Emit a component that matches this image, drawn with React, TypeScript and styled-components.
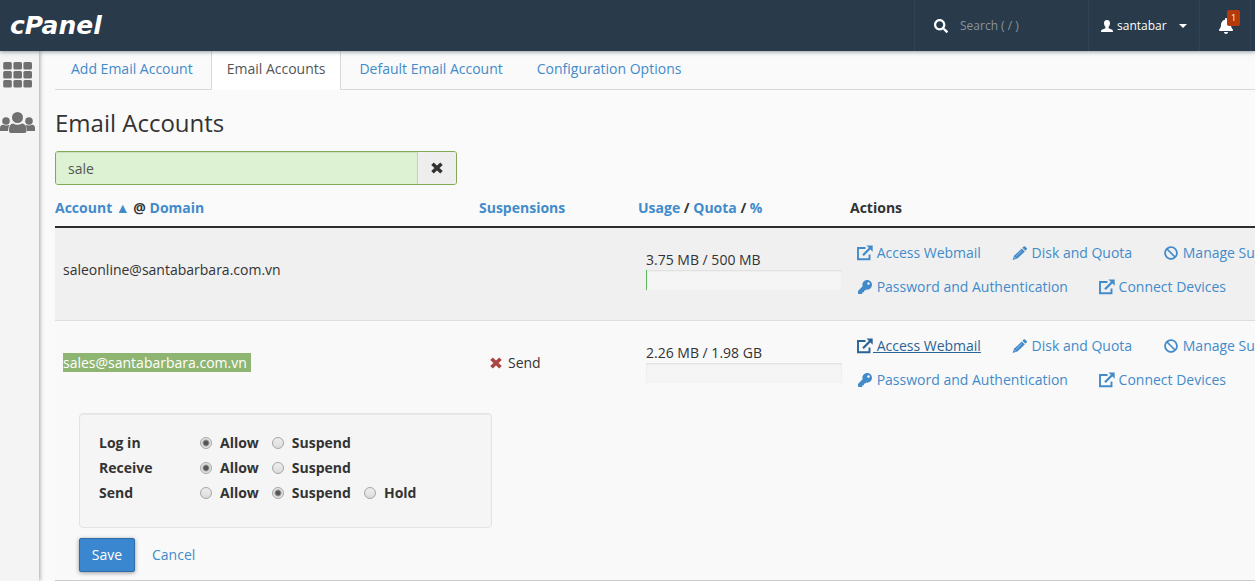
import React from "react";
import styled, { createGlobalStyle } from "styled-components";
import { FaSearch, FaBan, FaKey, FaBell } from "react-icons/fa";

const Global = createGlobalStyle`
  * { box-sizing: border-box; }
  body {
    margin: 0;
    background: #fafafa;
    color: #333;
    font: 14px/20px "Open Sans", "Noto Sans", sans-serif;
    overflow: hidden;
  }
  a { color: #428bca; text-decoration: none; }
`;

const Page = styled.div`
  display: flex;
  flex-direction: column;
  min-height: 100vh;
`;

const TopBar = styled.header`
  display: flex;
  align-items: stretch;
  height: 51px;
  background: #293a4a;
  color: #fff;
  box-shadow: 0 1px 4px rgba(41, 58, 74, 0.5);
  z-index: 1;
`;

const Brand = styled.a`
  display: flex;
  align-items: center;
  margin-right: auto;
  padding-left: 10px;
  color: #fff;
`;

const Wordmark = styled.span`
  font: italic 700 25px/30px "DejaVu Sans", sans-serif;
`;

const BarItem = styled.div<{ $width: number }>`
  display: flex;
  align-items: center;
  width: ${(p) => p.$width}px;
  border-left: 1px solid #324355;
`;

const SearchLabel = styled.label`
  display: flex;
  align-items: center;
  gap: 12px;
  padding-left: 19px;
  font-size: 14px;
`;

const SearchInput = styled.input`
  width: 110px;
  padding: 0;
  border: 0;
  outline: 0;
  background: transparent;
  color: #fff;
  font: 12px/20px "Open Sans", "Noto Sans", sans-serif;
  &::placeholder { color: #8a939b; opacity: 1; }
`;

const BarButton = styled.button`
  display: flex;
  align-items: center;
  gap: 4px;
  padding: 0 0 0 12px;
  border: 0;
  background: transparent;
  color: #fff;
  font: 12px/20px "Open Sans", "Noto Sans", sans-serif;
`;

const CaretSlot = styled.span`
  display: flex;
  margin-left: 8px;
`;

const BellButton = styled(BarButton)`
  position: relative;
  padding-left: 18px;
`;

const Badge = styled.span`
  position: absolute;
  top: -8px;
  left: 27px;
  width: 13px;
  height: 16px;
  border-radius: 2px;
  background: #b5390a;
  font-size: 9px;
  line-height: 16px;
  text-align: center;
`;

const Body = styled.div`
  display: flex;
  flex: 1;
`;

const Rail = styled.nav`
  display: flex;
  flex-direction: column;
  flex: none;
  gap: 24px;
  width: 39px;
  padding-top: 11px;
  background: #f4f4f4;
  box-shadow: 1px 0 4px rgba(0, 0, 0, 0.35);
`;

const RailLink = styled.a`
  display: flex;
  width: 36px;
  color: #707070;
`;

const Main = styled.main`
  flex: 1;
  min-width: 0;
  padding-left: 16px;
  overflow: hidden;
`;

const Tabs = styled.nav`
  display: flex;
  gap: 2px;
  height: 39px;
  border-bottom: 1px solid #d8d8d8;
`;

const Tab = styled.a<{ $active?: boolean }>`
  height: 39px;
  padding: 8px 15px;
  border: solid #d8d8d8;
  border-width: 0 1px;
  border-color: ${(p) => (p.$active ? "#d8d8d8" : "transparent")};
  background: ${(p) => (p.$active ? "#fff" : "transparent")};
  color: ${(p) => (p.$active ? "#555" : "#428bca")};
  white-space: nowrap;
`;

const Title = styled.h1`
  margin: 17px 0 12px;
  font-size: 24px;
  line-height: 32px;
  font-weight: 400;
`;

const Filter = styled.form`
  display: flex;
  width: 402px;
  height: 34px;
  border: 1px solid #82a957;
  border-radius: 3px;
  overflow: hidden;
`;

const FilterInput = styled.input`
  flex: 1;
  min-width: 0;
  padding: 2px 12px 0;
  border: 0;
  outline: 0;
  background: #dcf2d3;
  color: #555;
  font: 14px/20px "Open Sans", "Noto Sans", sans-serif;
  box-shadow: inset 0 1px 1px rgba(0, 0, 0, 0.08);
`;

const ClearButton = styled.button`
  display: flex;
  align-items: center;
  justify-content: center;
  width: 39px;
  padding: 0;
  border: 0;
  border-left: 1px solid #ccc;
  background: #eee;
  color: #333;
`;

const Table = styled.table`
  width: 100%;
  min-width: 1240px;
  margin-top: 11px;
  border-collapse: collapse;
  table-layout: fixed;
`;

const HeadCell = styled.th<{ $width?: number }>`
  width: ${(p) => (p.$width ? `${p.$width}px` : "auto")};
  height: 31px;
  padding: 2px 0 7px;
  border-bottom: 2px solid #2e2e2e;
  text-align: left;
  vertical-align: top;
  font-weight: 700;
`;

const Row = styled.tr<{ $shade?: boolean }>`
  background: ${(p) => (p.$shade ? "#f0f0f0" : "#f9f9f9")};
`;

const Cell = styled.td<{ $top: number }>`
  height: 93px;
  padding: ${(p) => p.$top}px 8px 0;
  border-top: 1px solid #ddd;
  vertical-align: top;
`;

const ActionCell = styled(Cell)`
  padding-left: 7px;
`;

const FormCell = styled.td`
  padding: 0 24px 8px;
  border-bottom: 1px solid #ccc;
`;

const Marked = styled.span`
  padding-right: 4px;
  background: #8fb573;
  color: #fff;
`;

const Suspension = styled.span`
  display: flex;
  align-items: center;
  gap: 6px;
  padding-left: 3px;
  svg { color: #a94442; }
`;

const Meter = styled.div`
  height: 20px;
  background: #f5f5f5;
  box-shadow: inset 0 1px 2px rgba(0, 0, 0, 0.1);
`;

const MeterFill = styled.div`
  height: 20px;
  background: #5cb85c;
`;

const ActionLine = styled.div`
  display: flex;
  gap: 31px;
  margin-bottom: 14px;
`;

const Action = styled.a<{ $hovered?: boolean }>`
  display: flex;
  align-items: center;
  white-space: pre;
  color: ${(p) => (p.$hovered ? "#2a6496" : "#428bca")};
  text-decoration: ${(p) => (p.$hovered ? "underline" : "none")};
`;

const IconSlot = styled.span`
  display: flex;
  justify-content: center;
  width: 16px;
`;

const Well = styled.div`
  display: flex;
  flex-direction: column;
  gap: 5px;
  width: 413px;
  height: 115px;
  padding: 19px;
  border: 1px solid #e3e3e3;
  border-radius: 4px;
  background: #f5f5f5;
  box-shadow: inset 0 1px 1px rgba(0, 0, 0, 0.05);
`;

const ChoiceRow = styled.div`
  display: flex;
  font-weight: 700;
`;

const ChoiceName = styled.span`
  width: 101px;
`;

const Choice = styled.label`
  display: flex;
  align-items: center;
  gap: 8px;
  margin-right: 13px;
`;

const Radio = styled.input`
  appearance: none;
  width: 12px;
  height: 12px;
  margin: 0;
  border: 1px solid #a6a6a6;
  border-radius: 50%;
  background: linear-gradient(#eee, #dcdcdc);
  &:checked {
    background: radial-gradient(circle, #555 0 2px, #e4e4e4 4px);
  }
`;

const Buttons = styled.div`
  display: flex;
  align-items: center;
  gap: 17px;
  margin-top: 10px;
`;

const SaveButton = styled.button`
  width: 56px;
  height: 34px;
  padding: 0;
  border: 1px solid #2c6ca8;
  border-radius: 2px;
  background: #3a87d0;
  color: #fff;
  font: 14px/20px "Open Sans", "Noto Sans", sans-serif;
  box-shadow: 0 1px 4px rgba(0, 0, 0, 0.4);
`;

const GridIcon = () => (
  <svg width="36" height="26" viewBox="0 0 36 26" fill="currentColor" aria-hidden="true">
    {[0, 9, 18].map((y) =>
      [3.2, 13.4, 23.4].map((x) => <rect key={`${x}-${y}`} x={x} y={y} width="8.6" height="7.5" rx="1.5" />)
    )}
  </svg>
);

const PeopleIcon = () => (
  <svg width="36" height="22" viewBox="0 0 36 22" fill="currentColor" aria-hidden="true">
    <circle cx="6" cy="9" r="3.8" />
    <circle cx="29" cy="9" r="3.8" />
    <path d="M0 19V16Q0 13 3 12.800Q6 14.300 9.500 12.800Q8 15 8 19Z" />
    <path d="M35 19V16Q35 13 32 12.800Q29 14.300 25.500 12.800Q27 15 27 19Z" />
    <circle cx="17.500" cy="5.500" r="5.500" />
    <path d="M9 18Q9 12 13 11.500Q17.500 14 22 11.500Q26.500 12 26.500 18V19Q26.500 21 24.500 21H11Q9 21 9 19Z" />
  </svg>
);

const UserIcon = () => (
  <svg width="12" height="12" viewBox="0 0 12 12" fill="currentColor" aria-hidden="true">
    <path d="M6 0C7.8 0 9 1.2 9 3.2 9 4.8 8.3 6 7.6 6.8V8.2L11.2 9.8Q12 10.3 12 12H0Q0 10.3 .8 9.8L4.4 8.2V6.8C3.700 6 3 4.800 3 3.200 3 1.200 4.200 0 6 0Z" />
  </svg>
);

const CaretIcon = () => (
  <svg width="8" height="4" viewBox="0 0 8 4" fill="currentColor" aria-hidden="true">
    <path d="M0 0H8L4 4Z" />
  </svg>
);

const CrossIcon = () => (
  <svg width="12" height="12" viewBox="0 0 12 12" stroke="currentColor" strokeWidth="3.6" aria-hidden="true">
    <path d="M1.500 1.700L10.500 10.300M10.500 1.700L1.500 10.300" />
  </svg>
);

const ExternalIcon = () => (
  <svg width="16" height="16" viewBox="0 0 16 16" fill="none" stroke="currentColor" aria-hidden="true">
    <path d="M8.500 3H1V14.200H12.500V9.500" strokeWidth="1.900" />
    <path d="M6 10.200L13 3.200" strokeWidth="2.300" />
    <path d="M9.500 .5H15.700V6.700Z" fill="currentColor" stroke="none" />
  </svg>
);

const PencilIcon = () => (
  <svg width="16" height="14" viewBox="0 0 16 14" fill="currentColor" aria-hidden="true">
    <path d="M11.600 .6Q12.400 -.2 13.200 .6L14.600 2Q15.400 2.800 14.600 3.600L13.400 4.800L10.400 1.800Z" />
    <path d="M9.800 2.400L12.800 5.400L5.400 12.600L.6 14L2 9.800Z" />
    <path d="M9.600 4.800L4.200 10.200" stroke="#fff" strokeOpacity=".55" strokeWidth=".8" />
    <path d="M2.300 11L3.600 12.300" stroke="#fff" strokeOpacity=".7" strokeWidth="1" />
  </svg>
);

function Actions({ hovered }: { hovered?: boolean }) {
  return (
    <>
      <ActionLine>
        <Action href="#webmail" $hovered={hovered}><IconSlot><ExternalIcon /></IconSlot>{"\u00a0Access Webmail"}</Action>
        <Action href="#quota"><IconSlot><PencilIcon /></IconSlot>{"\u00a0Disk and Quota"}</Action>
        <Action href="#suspend"><IconSlot><FaBan size={14} /></IconSlot>{"\u00a0Manage Suspension"}</Action>
      </ActionLine>
      <ActionLine>
        <Action href="#password"><IconSlot><FaKey size={14} /></IconSlot>{"\u00a0Password and Authentication"}</Action>
        <Action href="#devices"><IconSlot><ExternalIcon /></IconSlot>{"\u00a0Connect Devices"}</Action>
      </ActionLine>
    </>
  );
}

function Usage({ text, percent }: { text: string; percent: number }) {
  return (
    <>
      {text}
      <Meter><MeterFill style={{ width: `${percent}%` }} /></Meter>
    </>
  );
}

const settings = [
  { name: "Log in", options: ["Allow", "Suspend"], value: "Allow" },
  { name: "Receive", options: ["Allow", "Suspend"], value: "Allow" },
  { name: "Send", options: ["Allow", "Suspend", "Hold"], value: "Suspend" },
];

export default function App() {
  return (
    <Page>
      <Global />
      <TopBar>
        <Brand href="#home"><Wordmark>cPanel</Wordmark></Brand>
        <BarItem $width={174}>
          <SearchLabel>
            <FaSearch />
            <SearchInput aria-label="Search" placeholder="Search ( / )" />
          </SearchLabel>
        </BarItem>
        <BarItem $width={111}>
          <BarButton type="button">
            <UserIcon /> santabar
            <CaretSlot><CaretIcon /></CaretSlot>
          </BarButton>
        </BarItem>
        <BarItem $width={51}>
          <BellButton type="button" aria-label="Notifications">
            <FaBell size={16} />
            <Badge>1</Badge>
          </BellButton>
        </BarItem>
        <BarItem $width={5} />
      </TopBar>
      <Body>
        <Rail>
          <RailLink href="#tools" aria-label="Tools"><GridIcon /></RailLink>
          <RailLink href="#users" aria-label="Users"><PeopleIcon /></RailLink>
        </Rail>
        <Main>
          <Tabs>
            <Tab href="#add">Add Email Account</Tab>
            <Tab href="#accounts" $active>Email Accounts</Tab>
            <Tab href="#default">Default Email Account</Tab>
            <Tab href="#config">Configuration Options</Tab>
          </Tabs>
          <Title>Email Accounts</Title>
          <Filter>
            <FilterInput aria-label="Filter accounts" defaultValue="sale" />
            <ClearButton type="button" aria-label="Clear"><CrossIcon /></ClearButton>
          </Filter>
          <Table>
            <thead>
              <tr>
                <HeadCell $width={424}><a href="#account">Account ▲</a> @ <a href="#domain">Domain</a></HeadCell>
                <HeadCell $width={159}><a href="#suspensions">Suspensions</a></HeadCell>
                <HeadCell $width={212}><a href="#usage">Usage</a> / <a href="#quota">Quota</a> / <a href="#percent">%</a></HeadCell>
                <HeadCell>Actions</HeadCell>
              </tr>
            </thead>
            <tbody>
              <Row $shade>
                <Cell $top={32}>saleonline@santabarbara.com.vn</Cell>
                <Cell $top={32} />
                <Cell $top={22}><Usage text="3.75 MB / 500 MB" percent={0.75} /></Cell>
                <ActionCell $top={15}><Actions /></ActionCell>
              </Row>
              <Row>
                <Cell $top={32}><Marked>sales@santabarbara.com.vn</Marked></Cell>
                <Cell $top={32}><Suspension><CrossIcon /> Send</Suspension></Cell>
                <Cell $top={22}><Usage text="2.26 MB / 1.98 GB" percent={0} /></Cell>
                <ActionCell $top={15}><Actions hovered /></ActionCell>
              </Row>
              <Row>
                <FormCell colSpan={4}>
                  <Well>
                    {settings.map((s) => (
                      <ChoiceRow key={s.name} role="radiogroup" aria-label={s.name}>
                        <ChoiceName>{s.name}</ChoiceName>
                        {s.options.map((o) => (
                          <Choice key={o}>
                            <Radio type="radio" name={s.name} defaultChecked={o === s.value} />
                            {o}
                          </Choice>
                        ))}
                      </ChoiceRow>
                    ))}
                  </Well>
                  <Buttons>
                    <SaveButton type="button">Save</SaveButton>
                    <a href="#cancel">Cancel</a>
                  </Buttons>
                </FormCell>
              </Row>
            </tbody>
          </Table>
        </Main>
      </Body>
    </Page>
  );
}
